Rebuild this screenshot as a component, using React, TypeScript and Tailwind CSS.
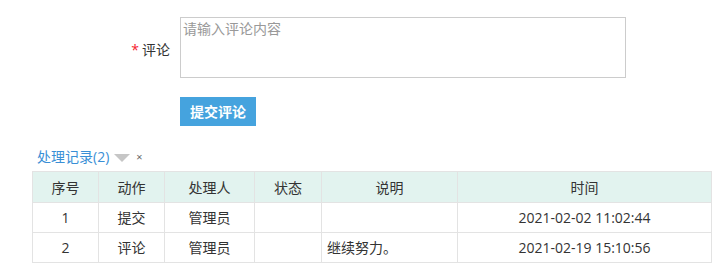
import React from 'react';

const rows = [
  { no: 1, action: '提交', user: '管理员', status: '', note: '', time: '2021-02-02 11:02:44' },
  { no: 2, action: '评论', user: '管理员', status: '', note: '继续努力。', time: '2021-02-19 15:10:56' },
];

const cols = ['w-[66px]', 'w-[66px]', 'w-[90px]', 'w-[67px]', 'w-[136px]', 'w-[254px]'];

export default function App() {
  return (
    <div
      className="min-h-[278px] w-[719px] bg-white pt-[17px] text-[14px] text-[#333]"
      style={{ fontFamily: '"Microsoft YaHei", "Open Sans", "Noto Sans CJK SC", sans-serif' }}
    >
      {/* comment form */}
      <div className="flex items-center">
        <label className="w-[170px] pt-[5px] text-right leading-5">
          <span className="mr-[3px] text-[#f5222d]">*</span>评论
        </label>
        <textarea
          placeholder="请输入评论内容"
          className="ml-[10px] h-[61px] w-[446px] resize-none border border-[#ccc] px-[2px] py-[1px] text-[14px] leading-5 outline-none placeholder:text-[#999]"
        />
      </div>
      <div className="mt-[19px] pl-[180px]">
        <button className="h-[29px] w-[76px] bg-[#45a3de] text-[14px] font-semibold text-white">提交评论</button>
      </div>

      {/* history */}
      <div className="mt-[21px] flex h-5 items-center pl-[37px] leading-5">
        <span className="text-[#3a8fd6]">处理记录(2)</span>
        <svg width="16" height="8" viewBox="0 0 16 8" className="ml-[5px] mt-[2px]">
          <path d="M0 0h16L8 8z" fill="#c6c6c6" />
        </svg>
        <span className="ml-[6px] text-[11px] text-[#666]">×</span>
      </div>
      <table className="ml-[32px] mt-[4px] table-fixed border-collapse">
        <thead>
          <tr className="h-[31px] bg-[#e2f3ef]">
            {['序号', '动作', '处理人', '状态', '说明', '时间'].map((h, i) => (
              <th key={h} className={`${cols[i]} border border-[#e3e3e3] p-0 text-center font-normal`}>
                {h}
              </th>
            ))}
          </tr>
        </thead>
        <tbody>
          {rows.map((r) => (
            <tr key={r.no} className="h-[30px]">
              <td className="border border-[#e3e3e3] text-center">{r.no}</td>
              <td className="border border-[#e3e3e3] text-center">{r.action}</td>
              <td className="border border-[#e3e3e3] text-center">{r.user}</td>
              <td className="border border-[#e3e3e3] text-center">{r.status}</td>
              <td className="border border-[#e3e3e3] pl-[5px] text-left">{r.note}</td>
              <td className="border border-[#e3e3e3] text-center">{r.time}</td>
            </tr>
          ))}
        </tbody>
      </table>
    </div>
  );
}
